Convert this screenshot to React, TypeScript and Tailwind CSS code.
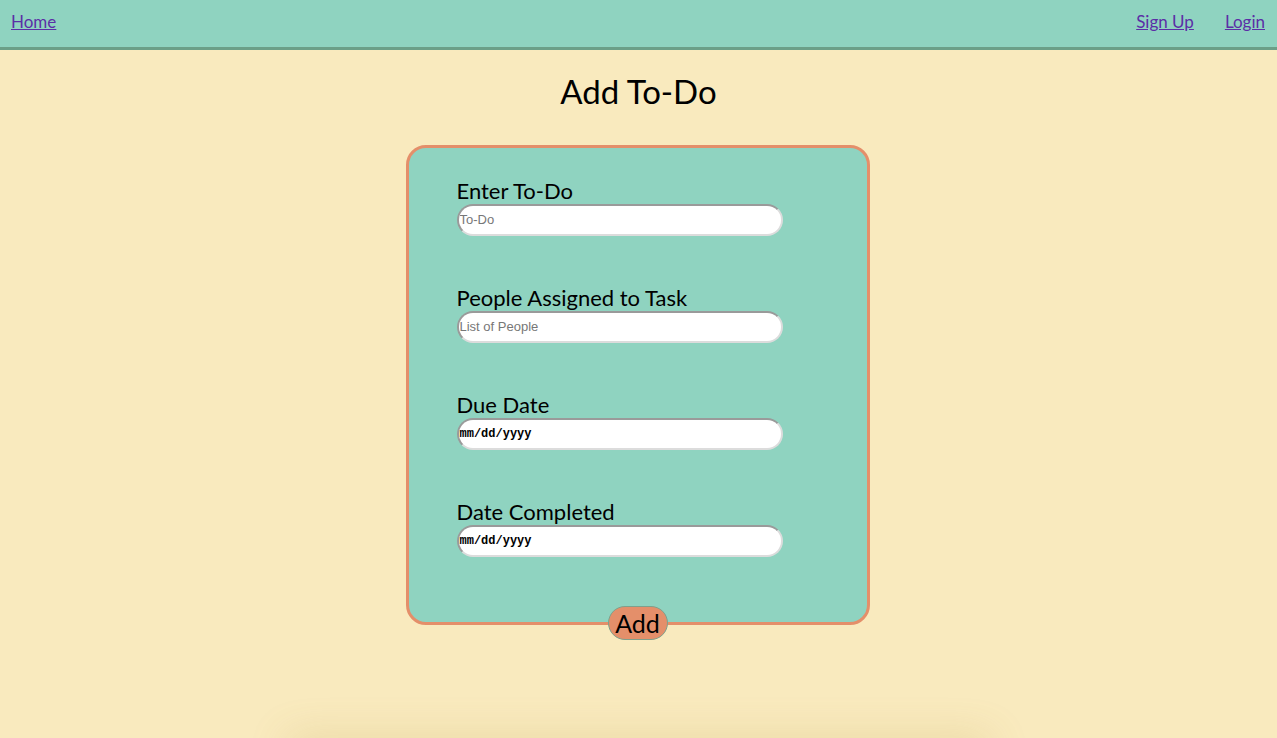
import { useState } from 'react'

const fields = [
  { label: 'Enter To-Do', type: 'text', placeholder: 'To-Do' },
  { label: 'People Assigned to Task', type: 'text', placeholder: 'List of People' },
  { label: 'Due Date', type: 'date', placeholder: 'mm/dd/yyyy' },
  { label: 'Date Completed', type: 'date', placeholder: 'mm/dd/yyyy' },
]

export default function App() {
  const [values, setValues] = useState<string[]>(['', '', '', ''])

  return (
    <div className="min-h-[738px] bg-[#f9eabe] overflow-hidden font-['Lato',sans-serif] text-black">
      {/* Nav */}
      <nav className="h-[50px] bg-[#8fd3c0] border-b-[3px] border-[#6b9f88] flex items-center justify-between px-[11px] pb-[4px]">
        <a href="#" className="text-[17px] text-[#5b2ea6] underline">Home</a>
        <div className="flex gap-[31px] pr-[1px]">
          <a href="#" className="text-[17px] text-[#5b2ea6] underline">Sign Up</a>
          <a href="#" className="text-[17px] text-[#5b2ea6] underline">Login</a>
        </div>
      </nav>

      <h1 className="text-center text-[33px] mt-[20px] leading-[42px]">Add To-Do</h1>

      <div className="relative mx-auto mt-[33px] -translate-x-[1px] w-[464px] h-[480px] bg-[#8fd3c0] border-[3px] border-[#e48f6a] rounded-[20px] pt-[29px] pl-[48px]">
        {fields.map((f, i) => (
          <div key={f.label} className="mb-[46px] h-[61px]">
            <label className="block text-[22px] leading-[27px]">{f.label}</label>
            <div className="w-[326px] h-[32px] bg-white rounded-full border-2 border-t-[#9a9a9a] border-l-[#9a9a9a] border-r-[#dcdcdc] border-b-[#dcdcdc] flex items-center px-[1px]">
              {f.type === 'date' ? (
                <span className="font-['Liberation_Mono',monospace] text-[12px] font-semibold text-black">{f.placeholder}</span>
              ) : (
                <input
                  value={values[i]}
                  onChange={e => setValues(values.map((v, j) => (j === i ? e.target.value : v)))}
                  placeholder={f.placeholder}
                  className="w-full bg-transparent outline-none text-[13px] font-['Liberation_Sans',sans-serif] placeholder:text-[#777]"
                />
              )}
            </div>
          </div>
        ))}
        <button className="absolute left-[199px] bottom-[-18px] w-[60px] h-[34px] bg-[#e48f6a] border border-[#7fa08c] rounded-full text-[25px] leading-none">
          Add
        </button>
      </div>

      <div className="mx-auto mt-[121px] w-[700px] h-[20px] shadow-[0_-6px_40px_rgba(180,150,60,0.3)]" />
    </div>
  )
}
